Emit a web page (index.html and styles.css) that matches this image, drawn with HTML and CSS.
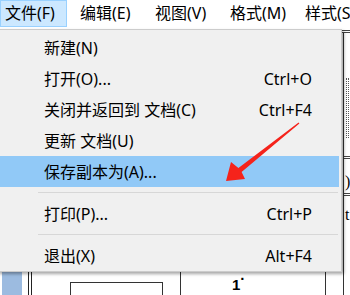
FILE: index.html
```html
<!DOCTYPE html>
<html lang="zh-CN">
<head>
<meta charset="utf-8">
<title>文件菜单</title>
<link rel="stylesheet" href="styles.css">
</head>
<body>
<div class="window">
  <div class="menubar">
    <div class="mb-item active">文件(F)</div>
    <div class="mb-item">编辑(E)</div>
    <div class="mb-item">视图(V)</div>
    <div class="mb-item">格式(M)</div>
    <div class="mb-item">样式(S)</div>
  </div>
  <div class="doc">
    <div class="doc-main">
      <div class="doc-fill"></div>
      <div class="doc-bottom">
        <div class="blue-block"></div>
        <div class="dbl-line"></div>
        <div class="gap-a"></div>
        <div class="box-top"></div>
        <div class="gap-b"></div>
        <div class="vline"></div>
        <div class="cell-num">1<span class="dot">·</span></div>
        <div class="vline"></div>
      </div>
    </div>
    <div class="doc-side">
      <div class="side-dbl"></div>
      <div class="side-body">
        <div class="side-dots"></div>
        <div class="side-dbl mid"></div>
        <div class="side-glyph">)</div>
        <div class="side-dbl"></div>
        <div class="side-glyph t">t</div>
      </div>
    </div>
  </div>

  <div class="dropdown">
    <div class="item"><span>新建(N)</span></div>
    <div class="item"><span>打开(O)...</span><span class="key">Ctrl+O</span></div>
    <div class="item"><span>关闭并返回到 文档(C)</span><span class="key">Ctrl+F4</span></div>
    <div class="item"><span>更新 文档(U)</span></div>
    <div class="item hi"><span>保存副本为(A)...</span></div>
    <div class="sep"></div>
    <div class="item"><span>打印(P)...</span><span class="key">Ctrl+P</span></div>
    <div class="sep"></div>
    <div class="item"><span>退出(X)</span><span class="key">Alt+F4</span></div>
  </div>

  <svg class="arrow" width="350" height="295" viewBox="0 0 350 295">
    <polygon fill="#f5231b" points="226,181 245,179 241.6,172 299.4,123.5 298.6,122.5 238.4,168 231,162"/>
  </svg>
</div>
</body>
</html>
```

FILE: styles.css
```css
* { box-sizing: border-box; }
html, body { margin: 0; padding: 0; }
body {
  width: 350px;
  height: 295px;
  overflow: hidden;
  background: #fff;
  font-family: "Noto Sans", "Noto Sans CJK SC", sans-serif;
  font-size: 16px;
  color: #000;
}
.window {
  position: relative;
  width: 350px;
  height: 295px;
  overflow: hidden;
}
.menubar {
  display: flex;
  gap: 8px;
  height: 28px;
  background: #fff;
  white-space: nowrap;
}
.mb-item {
  flex: 0 0 67px;
  height: 27px;
  line-height: 25px;
  padding-left: 4px;
  border: 1px solid transparent;
}
.mb-item.active {
  background: #cce8ff;
  border-color: #99d1ff;
}

.doc {
  display: flex;
  height: 267px;
}
.doc-main {
  flex: 0 0 342px;
  display: flex;
  flex-direction: column;
}
.doc-fill { flex: 1; }
.doc-bottom {
  flex: 0 0 23px;
  display: flex;
  align-items: stretch;
}
.blue-block {
  width: 20px;
  margin-left: 2px;
  background: #9cbbe0;
}
.dbl-line {
  width: 4px;
  margin-left: 6px;
  border-left: 1px solid #222;
  border-right: 1px solid #222;
}
.gap-a { width: 38px; }
.box-top {
  width: 93px;
  margin-top: 15px;
  border: 1px solid #333;
  border-bottom: none;
}
.gap-b { width: 17px; }
.vline {
  width: 1px;
  background: #333;
}
.cell-num {
  width: 144px;
  padding-left: 51px;
  padding-top: 8px;
  font-family: "Liberation Sans", sans-serif;
  font-weight: bold;
  font-size: 15px;
  line-height: 20px;
}
.cell-num .dot { position: relative; top: -6px; }

.doc-side {
  flex: 0 0 8px;
  display: flex;
  flex-direction: column;
}
.side-dbl {
  height: 3px;
  margin-top: 2px;
  border-top: 1px solid #444;
  border-bottom: 1px solid #444;
}
.side-body {
  flex: 1;
  margin-left: 1px;
  border-left: 1px solid #333;
  display: flex;
  flex-direction: column;
}
.side-dots {
  height: 60px;
  margin-top: 45px;
  margin-left: 2px;
  width: 3px;
  border-left: 1px dotted #555;
  border-right: 1px dotted #555;
}
.side-dbl.mid { margin-top: 18px; }
.side-glyph {
  font-family: "Liberation Serif", serif;
  font-size: 16px;
  line-height: 18px;
  height: 18px;
  margin-top: 14px;
  padding-left: 1px;
}
.side-glyph.t { margin-top: 10px; }

.dropdown {
  position: absolute;
  top: 29px;
  left: -3px;
  width: 345px;
  background: #f0f0f0;
  border: 1px solid #cccccc;
  padding: 2px 2px 0;
  box-shadow: 2px 2px 3px rgba(0, 0, 0, 0.35);
  white-space: nowrap;
}
.item {
  display: flex;
  justify-content: space-between;
  align-items: center;
  height: 31px;
  padding: 0 27px 0 44px;
  line-height: 20px;
}
.item.hi { background: #91c9f7; }
.key { text-align: right; }
.sep {
  height: 11px;
  padding-top: 5px;
  margin: 0 1px 0 38px;
}
.sep::before {
  content: "";
  display: block;
  height: 1px;
  background: #d7d7d7;
}
.arrow {
  position: absolute;
  left: 0;
  top: 0;
  pointer-events: none;
}
```
